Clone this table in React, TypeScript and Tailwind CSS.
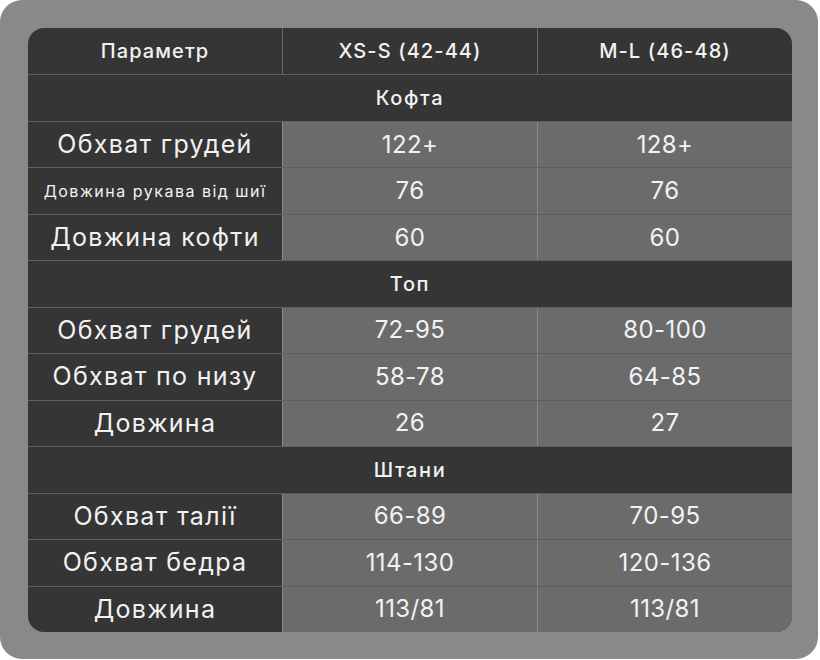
import React from "react";

type Row =
  | { kind: "section"; title: string }
  | { kind: "data"; label: string; a: string; b: string; small?: boolean };

const rows: Row[] = [
  { kind: "section", title: "Кофта" },
  { kind: "data", label: "Обхват грудей", a: "122+", b: "128+" },
  { kind: "data", label: "Довжина рукава від шиї", a: "76", b: "76", small: true },
  { kind: "data", label: "Довжина кофти", a: "60", b: "60" },
  { kind: "section", title: "Топ" },
  { kind: "data", label: "Обхват грудей", a: "72-95", b: "80-100" },
  { kind: "data", label: "Обхват по низу", a: "58-78", b: "64-85" },
  { kind: "data", label: "Довжина", a: "26", b: "27" },
  { kind: "section", title: "Штани" },
  { kind: "data", label: "Обхват талії", a: "66-89", b: "70-95" },
  { kind: "data", label: "Обхват бедра", a: "114-130", b: "120-136" },
  { kind: "data", label: "Довжина", a: "113/81", b: "113/81" },
];

export default function App() {
  return (
    <div className="bg-white w-[820px] h-[660px]">
      <div
        className="w-[818px] h-[659px] rounded-[22px] bg-[#898989] pl-[28px] pr-[26px] pt-[28px] pb-[27px]"
        style={{ fontFamily: "Inter, 'Noto Sans', sans-serif" }}
      >
        <div className="h-full rounded-[16px] overflow-hidden bg-[#353535] text-[#f2f2f2] grid grid-rows-[repeat(13,1fr)]">
          <div className="grid grid-cols-[254px_255px_1fr] text-[20px] font-medium tracking-[1.1px]">
            <div className="flex items-center justify-center">Параметр</div>
            <div className="flex items-center justify-center border-l border-[#6a6a6a]">XS-S (42-44)</div>
            <div className="flex items-center justify-center border-l border-[#6a6a6a]">M-L (46-48)</div>
          </div>
          {rows.map((r, i) =>
            r.kind === "section" ? (
              <div key={i} className="flex items-center justify-center border-t border-[#5e5e5e] text-[20px] font-medium tracking-[1.6px]">
                {r.title}
              </div>
            ) : (
              <div key={i} className="grid grid-cols-[254px_255px_1fr] border-t border-[#5e5e5e]">
                <div
                  className={
                    "flex items-center justify-center whitespace-nowrap " +
                    (r.small ? "text-[16px] tracking-[1.5px]" : "text-[25px] tracking-[1.3px]")
                  }
                >
                  {r.label}
                </div>
                <div className="flex items-center justify-center bg-[#6b6b6b] border-l border-[#8a8a8a] text-[24px] tracking-[0.4px]">{r.a}</div>
                <div className="flex items-center justify-center bg-[#6b6b6b] border-l border-[#8a8a8a] text-[24px] tracking-[0.4px]">{r.b}</div>
              </div>
            )
          )}
        </div>
      </div>
    </div>
  );
}
